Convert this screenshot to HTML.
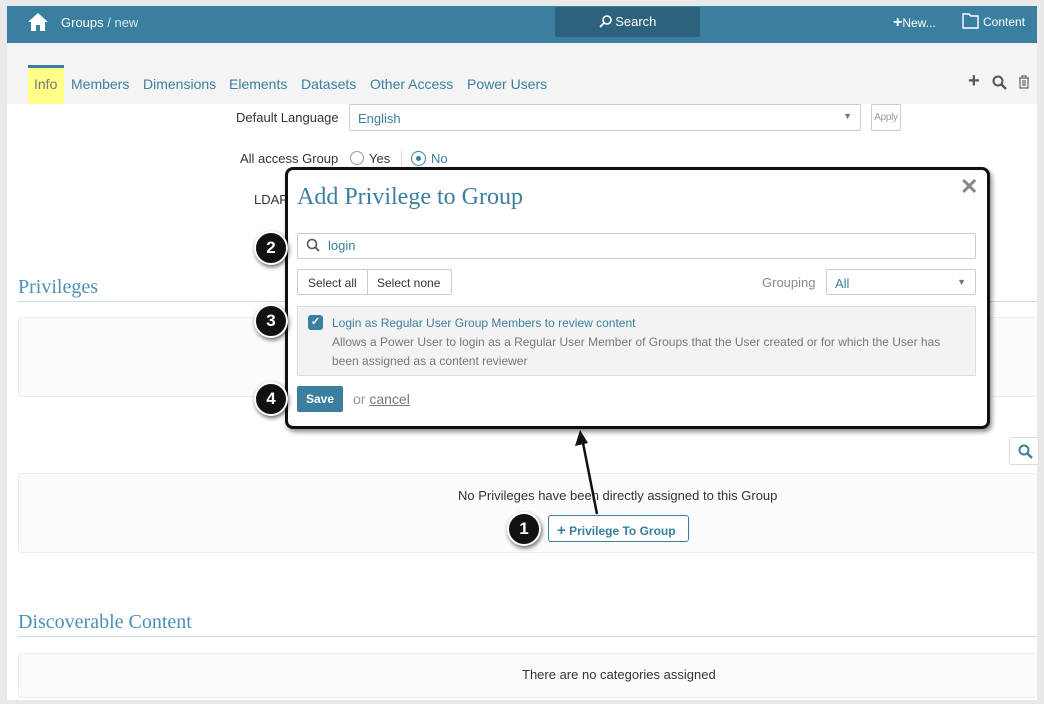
<!DOCTYPE html>
<html><head><style>
*{box-sizing:border-box;margin:0;padding:0}
body{width:1044px;height:704px;background:#e9e9e9;font-family:"Liberation Sans",sans-serif;position:relative;overflow:hidden;font-size:13px;color:#333}
.a{position:absolute}
.frame{left:7px;top:6px;width:1030px;height:694px;background:#fff;overflow:hidden}
.top{left:7px;top:6px;width:1030px;height:37px;background:#3a7fa0;color:#fff}
.tabs{left:7px;top:43px;width:1030px;height:61px;background:#f4f4f4}
.tab{position:absolute;top:76px;font-size:14px;color:#3a7fa0}
.box{border:1px solid #ececec;border-radius:4px;background:#fbfbfb}
.h{font-family:"Liberation Serif",serif;color:#4a90b8;font-size:20px}
.num{width:34px;height:34px;border-radius:50%;background:#111;border:2px solid #fff;box-shadow:1px 2px 4px rgba(0,0,0,.6);color:#fff;font-size:17px;font-weight:bold;text-align:center;line-height:30px}
</style></head><body>
<div class="a frame"></div>
<div class="a top">
 <svg class="a" style="left:20px;top:6px" width="22" height="20" viewBox="0 0 22 20"><path d="M11 1L1 10h3v9h5v-6h4v6h5v-9h3z" fill="#fff"/></svg>
 <div class="a" style="left:54px;top:9px;font-size:13px">Groups <span style="color:#d8e6ee">/ new</span></div>
 <div class="a" style="left:548px;top:1px;width:145px;height:30px;background:#2d627d;border-radius:2px;text-align:center;line-height:30px;font-size:13px">
  <svg width="13" height="13" viewBox="0 0 13 13" style="vertical-align:-2px"><circle cx="8" cy="5" r="4" fill="none" stroke="#fff" stroke-width="1.6"/><path d="M5 8L1 12" stroke="#fff" stroke-width="1.8"/></svg> Search</div>
 <div class="a" style="left:886px;top:8px;font-size:12px"><b style="font-size:16px">+</b>New...</div>
 <svg class="a" style="left:955px;top:7px" width="17" height="16" viewBox="0 0 17 16"><path d="M1 1h6l2 2h7v12H1z" fill="none" stroke="#fff" stroke-width="1.4"/></svg>
 <div class="a" style="left:976px;top:9px;font-size:12px">Content</div>
</div>
<div class="a tabs"></div>
<div class="a" style="left:28px;top:65px;width:36px;height:39px;background:#ffff88;border-top:3px solid #3a7fa0"></div>
<div class="tab" style="left:34px;color:#777">Info</div>
<div class="tab" style="left:71px">Members</div>
<div class="tab" style="left:143px">Dimensions</div>
<div class="tab" style="left:229px">Elements</div>
<div class="tab" style="left:301px">Datasets</div>
<div class="tab" style="left:370px">Other Access</div>
<div class="tab" style="left:467px">Power Users</div>
<div class="a" style="left:968px;top:70px;font-size:20px;font-weight:bold;color:#555">+</div>
<svg class="a" style="left:992px;top:75px" width="15" height="15" viewBox="0 0 15 15"><circle cx="6" cy="6" r="4.5" fill="none" stroke="#555" stroke-width="2"/><path d="M9 9l5 5" stroke="#555" stroke-width="2.4"/></svg>
<svg class="a" style="left:1018px;top:75px" width="12" height="14" viewBox="0 0 12 14"><path d="M1 3h10M4 3V1h4v2M2 3v10h8V3M5 5v6M7 5v6" fill="none" stroke="#666" stroke-width="1.2"/></svg>

<div class="a" style="left:236px;top:110px">Default Language</div>
<div class="a" style="left:349px;top:104px;width:512px;height:27px;border:1px solid #ccc;border-radius:2px;color:#3a7fa0;padding:6px 8px">English<span style="position:absolute;right:8px;top:6px;color:#777;font-size:9px">▼</span></div>
<div class="a" style="left:871px;top:104px;width:30px;height:27px;border:1px solid #ccc;border-radius:2px;font-size:10px;color:#999;padding:7px 0;text-align:center;letter-spacing:-.3px">Apply</div>
<div class="a" style="left:240px;top:151px">All access Group</div>
<div class="a" style="left:350px;top:151px;width:14px;height:14px;border:1px solid #999;border-radius:50%"></div>
<div class="a" style="left:369px;top:151px">Yes</div>
<div class="a" style="left:401px;top:150px;width:1px;height:16px;background:#ddd"></div>
<div class="a" style="left:411px;top:151px;width:15px;height:15px;border:1.5px solid #3a7fa0;border-radius:50%"><div style="margin:3.5px;width:5px;height:5px;border-radius:50%;background:#3a7fa0"></div></div>
<div class="a" style="left:431px;top:151px;color:#3a7fa0">No</div>
<div class="a" style="left:254px;top:192px">LDAP</div>

<div class="a h" style="left:18px;top:276px">Privileges</div>
<div class="a" style="left:18px;top:301px;width:1019px;height:1px;background:#c9dde8"></div>
<div class="a box" style="left:18px;top:317px;width:1019px;height:80px;border-right:none"></div>
<div class="a" style="left:1009px;top:437px;width:30px;height:28px;border:1px solid #ddd;border-radius:3px;background:#fff"><svg style="margin:6px 0 0 8px" width="15" height="15" viewBox="0 0 15 15"><circle cx="6" cy="6" r="4.5" fill="none" stroke="#3a7fa0" stroke-width="2"/><path d="M9 9l5 5" stroke="#3a7fa0" stroke-width="2.4"/></svg></div>
<div class="a box" style="left:18px;top:473px;width:1019px;height:80px;border-right:none"></div>
<div class="a" style="left:458px;top:488px">No Privileges have been directly assigned to this Group</div>
<div class="a" style="left:548px;top:515px;width:141px;height:27px;border:1px solid #3a7fa0;border-radius:3px;color:#3a7fa0;font-size:12px;font-weight:bold;padding:6px 8px;background:#fff"><span style="font-size:15px">+</span> Privilege To Group</div>
<div class="a num" style="left:507px;top:512px">1</div>
<div class="a h" style="left:18px;top:611px">Discoverable Content</div>
<div class="a" style="left:18px;top:636px;width:1019px;height:1px;background:#c9dde8"></div>
<div class="a box" style="left:18px;top:653px;width:1019px;height:45px;border-right:none"></div>
<div class="a" style="left:522px;top:667px">There are no categories assigned</div>

<svg class="a" style="left:570px;top:428px" width="40" height="90" viewBox="0 0 40 90"><path d="M27 86L12 10" stroke="#111" stroke-width="2.5"/><path d="M10 2L5 18L18 15z" fill="#111"/></svg>

<div class="a" style="left:285px;top:167px;width:705px;height:262px;background:#fff;border:3px solid #111;border-radius:8px;box-shadow:2px 3px 5px rgba(0,0,0,.45)"></div>
<div class="a" style="left:960px;top:174px;font-size:22px;color:#888;font-weight:bold">✕</div>
<div class="a" style="left:297px;top:184px;font-family:'Liberation Serif',serif;font-size:24px;color:#3a7fa0">Add Privilege to Group</div>
<div class="a" style="left:297px;top:233px;width:679px;height:26px;border:1px solid #ccc;border-radius:2px"></div>
<svg class="a" style="left:306px;top:238px" width="14" height="14" viewBox="0 0 14 14"><circle cx="6" cy="6" r="4.5" fill="none" stroke="#555" stroke-width="1.6"/><path d="M9 9l4 4" stroke="#555" stroke-width="1.8"/></svg>
<div class="a" style="left:328px;top:238px;color:#3a7fa0;font-size:13px">login</div>
<div class="a num" style="left:254px;top:231px">2</div>
<div class="a" style="left:297px;top:269px;width:155px;height:26px;border:1px solid #ccc;border-radius:2px;font-size:12px"><span style="position:absolute;left:10px;top:6px">Select all</span><span style="position:absolute;left:69px;top:0;width:1px;height:24px;background:#ccc"></span><span style="position:absolute;left:79px;top:6px">Select none</span></div>
<div class="a" style="left:762px;top:275px;color:#888">Grouping</div>
<div class="a" style="left:826px;top:269px;width:150px;height:26px;border:1px solid #ccc;border-radius:2px;color:#3a7fa0;padding:6px 8px">All<span style="position:absolute;right:9px;top:7px;color:#777;font-size:9px">▼</span></div>
<div class="a" style="left:297px;top:306px;width:679px;height:70px;background:#f3f3f3;border:1px solid #ddd"></div>
<div class="a" style="left:308px;top:315px;width:15px;height:15px;background:#3a7fa0;border-radius:3px;color:#fff;font-size:11px;text-align:center;line-height:15px;font-weight:bold">✓</div>
<div class="a" style="left:332px;top:316px;color:#3a7fa0;font-size:12px">Login as Regular User Group Members to review content</div>
<div class="a" style="left:332px;top:333px;color:#777;font-size:12px;line-height:19px;width:630px">Allows a Power User to login as a Regular User Member of Groups that the User created or for which the User has been assigned as a content reviewer</div>
<div class="a num" style="left:254px;top:304px">3</div>
<div class="a" style="left:297px;top:386px;width:46px;height:26px;background:#3a7fa0;border-radius:2px;color:#fff;font-weight:bold;font-size:12px;text-align:center;line-height:26px">Save</div>
<div class="a" style="left:353px;top:391px;color:#999;font-size:14px">or <span style="color:#777;text-decoration:underline">cancel</span></div>
<div class="a num" style="left:254px;top:382px">4</div>
</body></html>
